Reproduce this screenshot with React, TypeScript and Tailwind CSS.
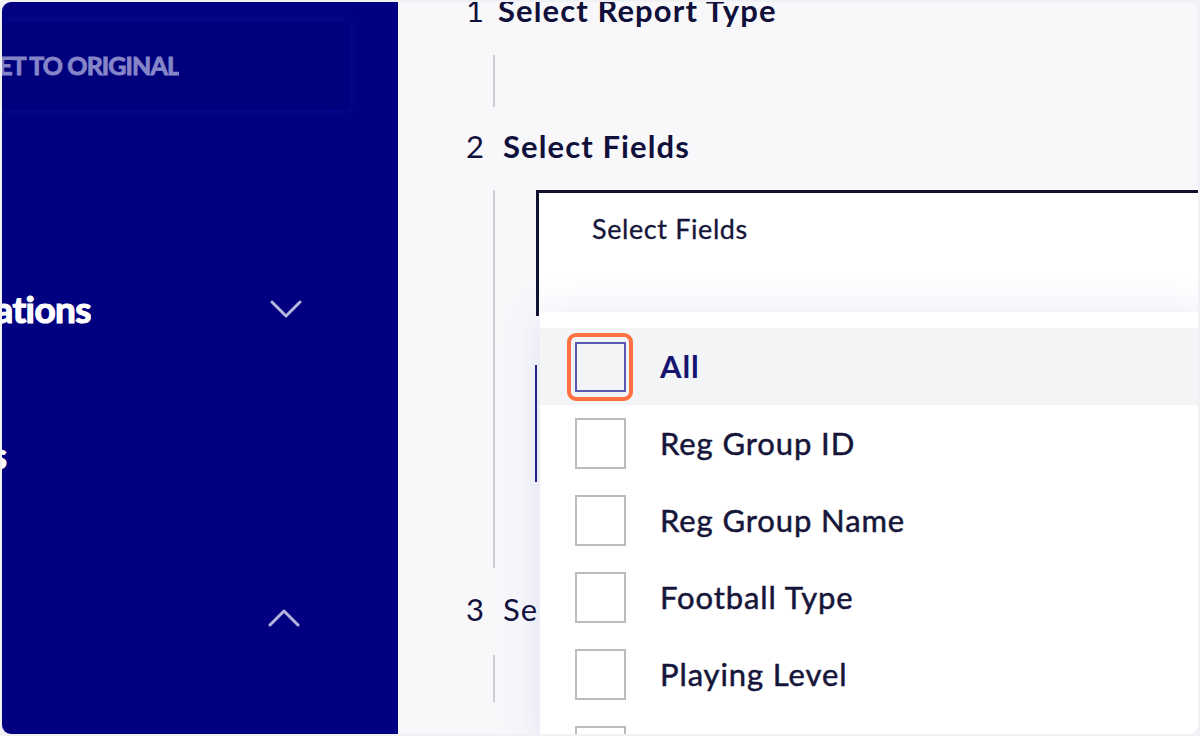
import React from 'react';

const font = { fontFamily: 'Lato, "Noto Sans", sans-serif' };

const Chevron: React.FC<{ up?: boolean }> = ({ up }) => (
  <svg width="32" height="20" viewBox="0 0 32 20" fill="none">
    <path
      d={up ? 'M2 17 L16 3 L30 17' : 'M2 3 L16 17 L30 3'}
      stroke="#b4b4dc"
      strokeWidth="3"
      strokeLinecap="round"
      strokeLinejoin="round"
    />
  </svg>
);

// label text is clipped on its left side, as in the cropped capture
const ClippedLabel: React.FC<{ text: string; width: string; className?: string }> = ({ text, width, className = '' }) => (
  <div className={`${width} overflow-hidden flex justify-end whitespace-nowrap ${className}`}>
    <span>{text}</span>
  </div>
);

const Sidebar = () => (
  <aside className="w-[396px] shrink-0 bg-[#000080] flex flex-col" style={font}>
    <div className="mt-[20px] w-[348px] h-[88px] flex items-center bg-[#00007c] rounded-r-[6px] shadow-[0_0_14px_rgba(20,20,160,0.6)]">
      <ClippedLabel
        text="RESET TO ORIGINAL"
        width="w-[177px]"
        className="text-[25px] font-bold tracking-[-0.9px] text-[#8585c8] [-webkit-text-stroke:0.9px_#8585c8]"
      />
    </div>

    <div className="mt-[169px] h-[60px] flex items-center">
      <ClippedLabel
        text="Registrations"
        width="w-[89px]"
        className="text-[37px] font-bold tracking-[-0.6px] text-white [-webkit-text-stroke:1.2px_white]"
      />
      <div className="ml-[179px]">
        <Chevron />
      </div>
    </div>

    <div className="mt-[86px] h-[60px] flex items-center">
      <ClippedLabel
        text="Teams"
        width="w-[5px]"
        className="text-[37px] font-bold text-white [-webkit-text-stroke:1.2px_white]"
      />
    </div>

    <div className="mt-[103px] h-[60px] flex items-center">
      <div className="ml-[266px]">
        <Chevron up />
      </div>
    </div>
  </aside>
);

interface StepProps {
  num: string;
  title: string;
  numWidth: string;
  bold?: boolean;
  children?: React.ReactNode;
  bodyClass: string;
  topGap: string;
}

const Step: React.FC<StepProps> = ({ num, title, numWidth, bold = true, children, bodyClass, topGap }) => (
  <div className={topGap}>
    <div
      className={`flex items-center h-[34px] text-[31px] leading-[34px] tracking-[1.1px] text-[#10103a] whitespace-nowrap ${bold ? 'font-bold' : 'font-normal'}`}
    >
      <span className={`${numWidth} font-normal`}>{num}</span>
      <span>{title}</span>
    </div>
    <div className={`ml-[27px] border-l-2 border-[#cdcdd2] ${bodyClass}`}>{children}</div>
  </div>
);

const fields = ['All', 'Reg Group ID', 'Reg Group Name', 'Football Type', 'Playing Level', 'Gender'];

const FieldsMenu = () => (
  <div className="absolute left-[142px] top-[310px] right-[-12px] bottom-[-20px] bg-white pt-[16px] shadow-[0_0_40px_rgba(90,90,200,0.14)]">
    {fields.map((f, i) => (
      <div key={f} className={`h-[77px] flex items-center ${i === 0 ? 'bg-[#f3f4f6]' : ''}`}>
        <div className="ml-[27px] w-[66px] h-[66px] flex items-center justify-center">
          {i === 0 ? (
            <div className="w-[67px] h-[68px] rounded-[9px] border-[4px] border-[#ff7043] flex items-center justify-center">
              <div className="w-[51px] h-[50px] border-2 border-[#5a5ab4]" />
            </div>
          ) : (
            <div className="w-[51px] h-[51px] border-2 border-[#bcbcbc] bg-white" />
          )}
        </div>
        <span
          className={`ml-[27px] text-[31px] tracking-[0.9px] ${
            i === 0
              ? 'font-bold text-[#151570]'
              : 'font-normal text-[#16163a] [-webkit-text-stroke:0.5px_#16163a]'
          }`}
        >
          {f}
        </span>
      </div>
    ))}
  </div>
);

export default function App() {
  return (
    <div className="w-[1200px] h-[736px] bg-[#f1f1f5] p-[2px]" style={font}>
      <div className="w-full h-full rounded-[9px] overflow-hidden flex">
        <Sidebar />
        <main className="relative flex-1 bg-[#f8f8fb] overflow-hidden">
          <div className="pl-[68px]">
            <Step num="1" title="Select Report Type" numWidth="w-[32px]" topGap="mt-[-9px]" bodyClass="mt-[28px] h-[52px]" />
            <Step num="2" title="Select Fields" numWidth="w-[37px]" topGap="mt-[22px]" bodyClass="mt-[27px] pl-[41px] pb-[86px]">
              <div className="h-[126px] border-t-[3px] border-l-[3px] border-[#111130] bg-white pl-[53px] pt-[16px]">
                <span className="text-[27px] tracking-[0.6px] text-[#16163a] [-webkit-text-stroke:0.3px_#16163a]">
                  Select Fields
                </span>
              </div>
              <div className="mt-[49px] h-[117px] border-l-2 border-[#1f1f8a] ml-[-1px]" />
            </Step>
            <Step num="3" title="Select Filters" numWidth="w-[37px]" bold={false} topGap="mt-[24px]" bodyClass="mt-[29px] h-[47px]" />
          </div>
          <FieldsMenu />
        </main>
      </div>
    </div>
  );
}
